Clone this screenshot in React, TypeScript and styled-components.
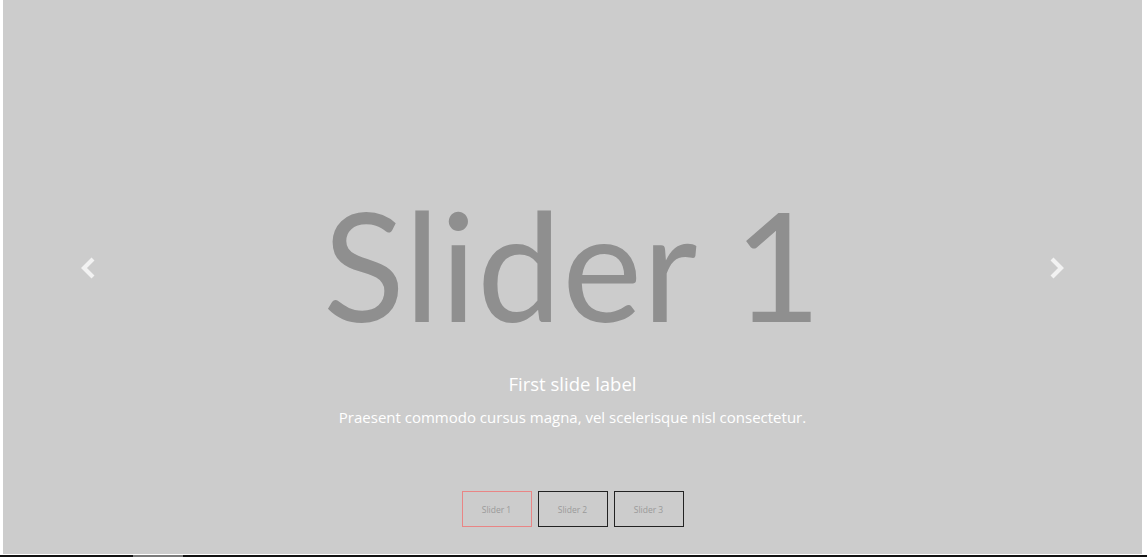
import React from "react";
import styled, { createGlobalStyle } from "styled-components";

const Global = createGlobalStyle`
  html, body { margin: 0; padding: 0; background: #fff; }
  body { font-family: "Open Sans", "Noto Sans", sans-serif; overflow: hidden; }
`;

const Page = styled.div`
  width: 1147px;
  height: 557px;
  display: flex;
  flex-direction: column;
`;

const Carousel = styled.section`
  position: relative;
  width: 1139px;
  height: 554px;
  margin: 0 0 0 3px;
  background: #cccccc;
  display: flex;
  flex-direction: column;
  align-items: center;
`;

const Title = styled.h1`
  margin: 184px 0 0;
  font-family: Lato, "Open Sans", sans-serif;
  font-weight: 400;
  font-size: 151px;
  line-height: 160px;
  color: #8f8f8f;
  letter-spacing: 0.5px;
`;

const Caption = styled.div`
  margin-top: 28px;
  text-align: center;
  color: #ffffff;
`;

const CaptionTitle = styled.h5`
  margin: 0;
  font-size: 18.5px;
  font-weight: 400;
  line-height: 24px;
`;

const CaptionText = styled.p`
  margin: 11px 0 0;
  font-size: 15px;
  line-height: 20px;
`;

const Indicators = styled.ol`
  list-style: none;
  margin: auto 0 27px;
  padding: 0;
  display: flex;
  gap: 6px;
`;

const Thumb = styled.li<{ $active?: boolean }>`
  width: 70px;
  height: 36px;
  box-sizing: border-box;
  border: 1px solid ${(p) => (p.$active ? "#e98585" : "#222222")};
  display: flex;
  align-items: center;
  justify-content: center;
  font-family: "Open Sans", sans-serif;
  font-size: 8.5px;
  color: #9a9a9a;
`;

const Control = styled.a<{ $side: "left" | "right" }>`
  position: absolute;
  top: 0;
  bottom: 0;
  ${(p) => (p.$side === "left" ? "left: 0;" : "right: 0;")}
  width: 15%;
  display: flex;
  align-items: center;
  justify-content: center;
  padding-bottom: 18px;
  box-sizing: border-box;
`;

const BottomRule = styled.div`
  margin-top: 1px;
  height: 2px;
  background: linear-gradient(
    to right,
    #111 0,
    #111 133px,
    #7a7a7a 133px,
    #7a7a7a 183px,
    #111 183px,
    #111 100%
  );
`;

const Chevron = ({ dir }: { dir: "left" | "right" }) => (
  <svg width="16" height="22" viewBox="0 0 16 22" aria-hidden>
    <polyline
      points={dir === "left" ? "13,2 4,11 13,20" : "3,2 12,11 3,20"}
      fill="none"
      stroke="#f2f2f2"
      strokeWidth="4.2"
      strokeLinejoin="miter"
    />
  </svg>
);

export default function App() {
  return (
    <Page>
      <Global />
      <Carousel>
        <Title>Slider 1</Title>
        <Caption>
          <CaptionTitle>First slide label</CaptionTitle>
          <CaptionText>
            Praesent commodo cursus magna, vel scelerisque nisl consectetur.
          </CaptionText>
        </Caption>
        <Indicators>
          <Thumb $active>Slider 1</Thumb>
          <Thumb>Slider 2</Thumb>
          <Thumb>Slider 3</Thumb>
        </Indicators>
        <Control $side="left">
          <Chevron dir="left" />
        </Control>
        <Control $side="right">
          <Chevron dir="right" />
        </Control>
      </Carousel>
      <BottomRule />
    </Page>
  );
}
